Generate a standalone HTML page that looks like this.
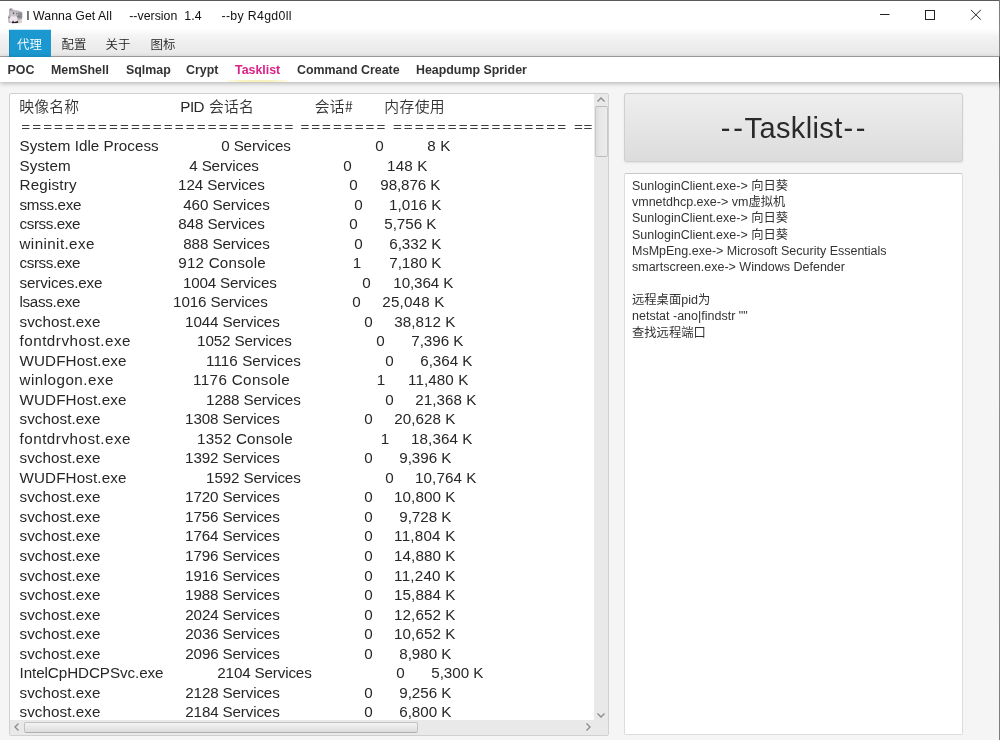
<!DOCTYPE html><html lang="zh"><head><meta charset="utf-8"><title>I Wanna Get All</title><style>

*{box-sizing:border-box;margin:0;padding:0}
html,body{width:1000px;height:740px;overflow:hidden;background:#f5f5f5}
body{position:relative;font-family:"Liberation Sans","Noto Sans CJK SC",sans-serif;color:#333}
.abs{position:absolute}
#top{left:0;top:0;width:1000px;height:29px;background:#fff;border-top:1px solid #5a5a5a}
#rb{left:999px;top:0;width:1px;height:740px;background:linear-gradient(#7a7a7a 0,#8c8c8c 56px,#3c3c3c 57px,#3c3c3c 78px,#9a9a9a 90px,#7d7d7d 100%)}
#menu{left:0;top:29px;width:1000px;height:28px;background:linear-gradient(#fff 0,#f4f4f4 25%,#ededed 60%,#e9e9e9 100%);border-bottom:1px solid #a6a6a6}
.mi{top:30px;height:27px;line-height:28px;font-size:12.4px;color:#222;text-align:center;font-family:"Noto Sans CJK SC",sans-serif;font-weight:350}
#m0{left:8.5px;width:42px;height:27px;background:#1b98d0;color:#fff;box-shadow:inset 1px 0 0 #178abd,0 -1px 0 #bfe8fa}
#tabs{left:0;top:57px;width:1000px;height:25px;background:#fff;box-shadow:0 1px 5px rgba(0,0,0,.30)}
.tb{top:61px;line-height:18px;font-size:12.4px;font-weight:bold;color:#333;white-space:pre}
#lp{left:9px;top:93px;width:600px;height:642.5px;background:#fff;border:1px solid #d0d0d0;border-radius:2px;overflow:hidden}
.t{position:absolute;white-space:pre;line-height:20px;height:20px;font-size:15.2px;color:#272727}
.ti{font-size:12.3px;color:#111}
.e{color:#3c3c3c;transform:translateY(0.35px) scaleY(0.7)}
.bt{font-size:29px;line-height:40px;height:40px;color:#2a2a2a}
.c{font-family:"Noto Sans CJK SC",sans-serif;font-size:14.8px;color:#333;font-weight:350}
#vs{left:594px;top:94px;width:14px;height:627px;background:#e9e9e9}
#vt{left:594.5px;top:106px;width:13px;height:50.5px;background:linear-gradient(90deg,#dcdcdc,#e6e6e6 30%,#ececec);border:1px solid #c9c9c9;border-top-color:#bcbcbc;border-bottom-color:#bcbcbc;border-radius:2px}
#hs{left:10px;top:720px;width:598px;height:14.5px;background:#e9e9e9}
#ht{left:23.5px;top:722px;width:394px;height:11px;background:linear-gradient(#f4f4f4,#dcdcdc);border:1px solid #c2c2c2;border-bottom-color:#b0b0b0;border-radius:2px}
#btn{left:624px;top:93px;width:339px;height:68.5px;background:linear-gradient(#eeeeee,#dcdcdc);border:1px solid #cfcfcf;border-radius:2px;text-align:center;font-size:31.4px;line-height:67px;color:#333;box-shadow:0 1px 2px rgba(0,0,0,.08)}
#rp{left:624px;top:173px;width:339px;height:562px;background:#fff;border:1px solid #dcdcdc;border-top-color:#c8c8c8;border-radius:2px}
.r{position:absolute;left:632px;white-space:pre;font-size:12.5px;line-height:16px;height:16px;color:#333}
.k{font-size:12.3px}
svg{position:absolute;overflow:visible}
#all{position:absolute;left:0;top:0;width:1000px;height:740px;will-change:transform}

</style></head><body>
<div id="all">
<div class="abs" id="top"></div>
<svg style="left:6px;top:6px" width="18" height="19" viewBox="0 0 18 19"><defs><filter id="b" x="-20%" y="-20%" width="140%" height="140%"><feGaussianBlur stdDeviation="0.55"/></filter></defs><g filter="url(#b)"><path d="M3 3L5.5 2L8 4L12 4.5L16 6L16 11L15 17L2.5 17L2 12L3 8Z" fill="#bdb5bc"/><ellipse cx="7.5" cy="13" rx="4" ry="3.2" fill="#eee6ea"/><ellipse cx="7.5" cy="8" rx="3.4" ry="2.4" fill="#cbc2ca"/><rect x="12" y="6.5" width="4.3" height="6" fill="#8f8f93"/><ellipse cx="7.6" cy="7.3" rx="0.7" ry="1" fill="#5a4f5c"/><path d="M3.6 4.5L4.6 1.9L6 4.2Z" fill="#8d888e"/><rect x="2.2" y="10.6" width="2" height="1.6" fill="#8e8a8d"/><rect x="11" y="9.6" width="3.6" height="1.8" fill="#7f8486"/><ellipse cx="10.8" cy="7.6" rx="0.6" ry="0.9" fill="#6a6070"/><path d="M6 16L7 14.5L8 16L12.5 15L12 17L6 17.3Z" fill="#2a2226"/><path d="M12.5 14L16 13.5L16 17L12 17.4Z" fill="#dcd5c8"/></g></svg>
<svg style="left:880px;top:9px" width="102" height="12" viewBox="0 0 102 12"><g stroke="#222" stroke-width="1" fill="none"><path d="M0 5.5h9.5"/><rect x="45.5" y="1.5" width="9" height="9"/><path d="M91 0.9l9.8 9.8M100.8 0.9l-9.8 9.8"/></g></svg>
<div class="abs" id="menu"></div>
<div class="abs mi" id="m0">代理</div>
<div class="abs mi" style="left:52px;width:44px">配置</div>
<div class="abs mi" style="left:96px;width:44px">关于</div>
<div class="abs mi" style="left:141px;width:44px">图标</div>
<div class="abs" id="tabs"></div>
<div class="abs tb" style="left:7.6px">POC</div>
<div class="abs tb" style="left:51px">MemShell</div>
<div class="abs tb" style="left:126px">Sqlmap</div>
<div class="abs tb" style="left:186px">Crypt</div>
<div class="abs tb" style="left:235px;color:#dc1f86">Tasklist</div>
<div class="abs tb" style="left:297px">Command Create</div>
<div class="abs tb" style="left:416px">Heapdump Sprider</div>
<div class="abs" style="left:227px;top:80px;width:61px;height:1.6px;background:linear-gradient(90deg,#fdfbe6,#f8f2bc 30%,#f8f2bc 70%,#fdfbe6)"></div>
<div class="abs" id="lp"></div>
<div class="abs" id="btn"></div>
<div class="abs" id="rp"></div>
<span class="t c" style="left:19.30px;top:96.0px;letter-spacing:0.17px">映像名称</span>
<span class="t" style="left:180.30px;top:97.0px;letter-spacing:-0.52px">PID</span>
<span class="t c" style="left:208.90px;top:96.0px;letter-spacing:0.25px">会话名</span>
<span class="t c" style="left:314.70px;top:96.0px;letter-spacing:0.25px">会话#</span>
<span class="t c" style="left:384.30px;top:96.0px;letter-spacing:0.37px">内存使用</span>
<span class="t bt" style="left:720.80px;top:108.0px;letter-spacing:2.74px">--</span>
<span class="t bt" style="left:744.60px;top:108.0px;letter-spacing:0.37px">Tasklist</span>
<span class="t bt" style="left:843.40px;top:108.0px;letter-spacing:2.74px">--</span>
<span class="t ti" style="left:26.20px;top:6.0px;letter-spacing:0.05px">I Wanna Get All</span>
<span class="t ti" style="left:129.20px;top:6.0px;letter-spacing:0.04px">--version  1.4</span>
<span class="t ti" style="left:221.50px;top:6.0px;letter-spacing:0.34px">--by R4gd0ll</span>
<span class="t e" style="left:21.20px;top:116.5px;letter-spacing:2.10px">=========================</span>
<span class="t e" style="left:300.40px;top:116.5px;letter-spacing:1.99px">========</span>
<span class="t e" style="left:392.90px;top:116.5px;letter-spacing:2.09px">================</span>
<span class="t e" style="left:573.90px;top:116.5px;letter-spacing:0.73px">==</span>
<span class="t nm" style="left:19.50px;top:136.0px;letter-spacing:0.04px">System Idle Process</span>
<span class="t" style="left:221.30px;top:136.0px;letter-spacing:-0.16px">0 Services</span>
<span class="t" style="left:375.25px;top:136.0px">0</span>
<span class="t" style="left:427.30px;top:136.0px;letter-spacing:0.12px">8 K</span>
<span class="t nm" style="left:19.50px;top:155.6px;letter-spacing:0.10px">System</span>
<span class="t" style="left:189.30px;top:155.6px;letter-spacing:-0.16px">4 Services</span>
<span class="t" style="left:343.25px;top:155.6px">0</span>
<span class="t" style="left:387.10px;top:155.6px;letter-spacing:0.14px">148 K</span>
<span class="t nm" style="left:19.50px;top:175.1px;letter-spacing:0.20px">Registry</span>
<span class="t" style="left:178.10px;top:175.1px;letter-spacing:-0.10px">124 Services</span>
<span class="t" style="left:349.25px;top:175.1px">0</span>
<span class="t" style="left:380.30px;top:175.1px;letter-spacing:-0.11px">98,876 K</span>
<span class="t nm" style="left:19.50px;top:194.6px;letter-spacing:-0.31px">smss.exe</span>
<span class="t" style="left:183.30px;top:194.6px;letter-spacing:-0.12px">460 Services</span>
<span class="t" style="left:354.25px;top:194.6px">0</span>
<span class="t" style="left:389.10px;top:194.6px;letter-spacing:-0.02px">1,016 K</span>
<span class="t nm" style="left:19.50px;top:214.1px;letter-spacing:-0.40px">csrss.exe</span>
<span class="t" style="left:178.30px;top:214.1px;letter-spacing:-0.12px">848 Services</span>
<span class="t" style="left:349.25px;top:214.1px">0</span>
<span class="t" style="left:384.30px;top:214.1px;letter-spacing:-0.05px">5,756 K</span>
<span class="t nm" style="left:19.50px;top:233.6px;letter-spacing:0.40px">wininit.exe</span>
<span class="t" style="left:183.30px;top:233.6px;letter-spacing:-0.12px">888 Services</span>
<span class="t" style="left:354.25px;top:233.6px">0</span>
<span class="t" style="left:389.30px;top:233.6px;letter-spacing:-0.05px">6,332 K</span>
<span class="t nm" style="left:19.50px;top:253.2px;letter-spacing:-0.40px">csrss.exe</span>
<span class="t" style="left:178.30px;top:253.2px;letter-spacing:0.21px">912 Console</span>
<span class="t" style="left:352.75px;top:253.2px">1</span>
<span class="t" style="left:389.30px;top:253.2px;letter-spacing:-0.05px">7,180 K</span>
<span class="t nm" style="left:19.50px;top:272.7px;letter-spacing:-0.13px">services.exe</span>
<span class="t" style="left:183.10px;top:272.7px;letter-spacing:-0.21px">1004 Services</span>
<span class="t" style="left:362.25px;top:272.7px">0</span>
<span class="t" style="left:393.30px;top:272.7px;letter-spacing:-0.11px">10,364 K</span>
<span class="t nm" style="left:19.50px;top:292.2px;letter-spacing:-0.30px">lsass.exe</span>
<span class="t" style="left:173.10px;top:292.2px;letter-spacing:-0.13px">1016 Services</span>
<span class="t" style="left:352.25px;top:292.2px">0</span>
<span class="t" style="left:382.30px;top:292.2px;letter-spacing:0.18px">25,048 K</span>
<span class="t nm" style="left:19.50px;top:311.7px;letter-spacing:0.08px">svchost.exe</span>
<span class="t" style="left:185.10px;top:311.7px;letter-spacing:-0.13px">1044 Services</span>
<span class="t" style="left:364.25px;top:311.7px">0</span>
<span class="t" style="left:394.30px;top:311.7px;letter-spacing:0.03px">38,812 K</span>
<span class="t nm" style="left:19.50px;top:331.2px;letter-spacing:0.51px">fontdrvhost.exe</span>
<span class="t" style="left:197.10px;top:331.2px;letter-spacing:-0.13px">1052 Services</span>
<span class="t" style="left:376.25px;top:331.2px">0</span>
<span class="t" style="left:411.30px;top:331.2px;letter-spacing:-0.05px">7,396 K</span>
<span class="t nm" style="left:19.50px;top:350.8px;letter-spacing:0.13px">WUDFHost.exe</span>
<span class="t" style="left:206.10px;top:350.8px;letter-spacing:0.06px">1116 Services</span>
<span class="t" style="left:385.25px;top:350.8px">0</span>
<span class="t" style="left:420.30px;top:350.8px;letter-spacing:-0.05px">6,364 K</span>
<span class="t nm" style="left:19.50px;top:370.3px;letter-spacing:0.48px">winlogon.exe</span>
<span class="t" style="left:193.10px;top:370.3px;letter-spacing:0.36px">1176 Console</span>
<span class="t" style="left:376.75px;top:370.3px">1</span>
<span class="t" style="left:408.10px;top:370.3px;letter-spacing:0.08px">11,480 K</span>
<span class="t nm" style="left:19.50px;top:389.8px;letter-spacing:0.13px">WUDFHost.exe</span>
<span class="t" style="left:206.10px;top:389.8px;letter-spacing:-0.13px">1288 Services</span>
<span class="t" style="left:385.25px;top:389.8px">0</span>
<span class="t" style="left:415.30px;top:389.8px;letter-spacing:0.03px">21,368 K</span>
<span class="t nm" style="left:19.50px;top:409.3px;letter-spacing:0.08px">svchost.exe</span>
<span class="t" style="left:185.10px;top:409.3px;letter-spacing:-0.13px">1308 Services</span>
<span class="t" style="left:364.25px;top:409.3px">0</span>
<span class="t" style="left:394.30px;top:409.3px;letter-spacing:0.03px">20,628 K</span>
<span class="t nm" style="left:19.50px;top:428.8px;letter-spacing:0.51px">fontdrvhost.exe</span>
<span class="t" style="left:197.10px;top:428.8px;letter-spacing:0.17px">1352 Console</span>
<span class="t" style="left:380.75px;top:428.8px">1</span>
<span class="t" style="left:411.10px;top:428.8px;letter-spacing:0.06px">18,364 K</span>
<span class="t nm" style="left:19.50px;top:448.4px;letter-spacing:0.08px">svchost.exe</span>
<span class="t" style="left:185.10px;top:448.4px;letter-spacing:-0.13px">1392 Services</span>
<span class="t" style="left:364.25px;top:448.4px">0</span>
<span class="t" style="left:399.30px;top:448.4px;letter-spacing:-0.05px">9,396 K</span>
<span class="t nm" style="left:19.50px;top:467.9px;letter-spacing:0.13px">WUDFHost.exe</span>
<span class="t" style="left:206.10px;top:467.9px;letter-spacing:-0.13px">1592 Services</span>
<span class="t" style="left:385.25px;top:467.9px">0</span>
<span class="t" style="left:415.10px;top:467.9px;letter-spacing:0.06px">10,764 K</span>
<span class="t nm" style="left:19.50px;top:487.4px;letter-spacing:0.08px">svchost.exe</span>
<span class="t" style="left:185.10px;top:487.4px;letter-spacing:-0.13px">1720 Services</span>
<span class="t" style="left:364.25px;top:487.4px">0</span>
<span class="t" style="left:394.10px;top:487.4px;letter-spacing:0.06px">10,800 K</span>
<span class="t nm" style="left:19.50px;top:506.9px;letter-spacing:0.08px">svchost.exe</span>
<span class="t" style="left:185.10px;top:506.9px;letter-spacing:-0.13px">1756 Services</span>
<span class="t" style="left:364.25px;top:506.9px">0</span>
<span class="t" style="left:399.30px;top:506.9px;letter-spacing:-0.05px">9,728 K</span>
<span class="t nm" style="left:19.50px;top:526.4px;letter-spacing:0.08px">svchost.exe</span>
<span class="t" style="left:185.10px;top:526.4px;letter-spacing:-0.13px">1764 Services</span>
<span class="t" style="left:364.25px;top:526.4px">0</span>
<span class="t" style="left:394.10px;top:526.4px;letter-spacing:0.22px">11,804 K</span>
<span class="t nm" style="left:19.50px;top:546.0px;letter-spacing:0.08px">svchost.exe</span>
<span class="t" style="left:185.10px;top:546.0px;letter-spacing:-0.13px">1796 Services</span>
<span class="t" style="left:364.25px;top:546.0px">0</span>
<span class="t" style="left:394.10px;top:546.0px;letter-spacing:0.06px">14,880 K</span>
<span class="t nm" style="left:19.50px;top:565.5px;letter-spacing:0.08px">svchost.exe</span>
<span class="t" style="left:185.10px;top:565.5px;letter-spacing:-0.13px">1916 Services</span>
<span class="t" style="left:364.25px;top:565.5px">0</span>
<span class="t" style="left:394.10px;top:565.5px;letter-spacing:0.22px">11,240 K</span>
<span class="t nm" style="left:19.50px;top:585.0px;letter-spacing:0.08px">svchost.exe</span>
<span class="t" style="left:185.10px;top:585.0px;letter-spacing:-0.13px">1988 Services</span>
<span class="t" style="left:364.25px;top:585.0px">0</span>
<span class="t" style="left:394.10px;top:585.0px;letter-spacing:0.06px">15,884 K</span>
<span class="t nm" style="left:19.50px;top:604.5px;letter-spacing:0.08px">svchost.exe</span>
<span class="t" style="left:185.30px;top:604.5px;letter-spacing:-0.15px">2024 Services</span>
<span class="t" style="left:364.25px;top:604.5px">0</span>
<span class="t" style="left:394.10px;top:604.5px;letter-spacing:0.06px">12,652 K</span>
<span class="t nm" style="left:19.50px;top:624.0px;letter-spacing:0.08px">svchost.exe</span>
<span class="t" style="left:185.30px;top:624.0px;letter-spacing:-0.15px">2036 Services</span>
<span class="t" style="left:364.25px;top:624.0px">0</span>
<span class="t" style="left:394.10px;top:624.0px;letter-spacing:0.06px">10,652 K</span>
<span class="t nm" style="left:19.50px;top:643.6px;letter-spacing:0.08px">svchost.exe</span>
<span class="t" style="left:185.30px;top:643.6px;letter-spacing:-0.15px">2096 Services</span>
<span class="t" style="left:364.25px;top:643.6px">0</span>
<span class="t" style="left:399.30px;top:643.6px;letter-spacing:-0.05px">8,980 K</span>
<span class="t nm" style="left:19.50px;top:663.1px;letter-spacing:-0.07px">IntelCpHDCPSvc.exe</span>
<span class="t" style="left:217.30px;top:663.1px;letter-spacing:-0.15px">2104 Services</span>
<span class="t" style="left:396.25px;top:663.1px">0</span>
<span class="t" style="left:431.30px;top:663.1px;letter-spacing:-0.05px">5,300 K</span>
<span class="t nm" style="left:19.50px;top:682.6px;letter-spacing:0.08px">svchost.exe</span>
<span class="t" style="left:185.30px;top:682.6px;letter-spacing:-0.15px">2128 Services</span>
<span class="t" style="left:364.25px;top:682.6px">0</span>
<span class="t" style="left:399.30px;top:682.6px;letter-spacing:-0.05px">9,256 K</span>
<span class="t nm" style="left:19.50px;top:702.1px;letter-spacing:0.08px">svchost.exe</span>
<span class="t" style="left:185.30px;top:702.1px;letter-spacing:-0.15px">2184 Services</span>
<span class="t" style="left:364.25px;top:702.1px">0</span>
<span class="t" style="left:399.30px;top:702.1px;letter-spacing:-0.05px">6,800 K</span>
<div class="abs" id="vs"></div><div class="abs" id="vt"></div><div class="abs" id="hs"></div><div class="abs" id="ht"></div>
<div class="abs" style="left:594px;top:720px;width:14px;height:14px;background:#e9e9e9"></div>
<svg style="left:594px;top:93px" width="14" height="14" viewBox="0 0 14 14"><path d="M3.5 8.5L7 5l3.5 3.5" stroke="#8a8a8a" stroke-width="1.3" fill="none"/></svg>
<svg style="left:594px;top:707.5px" width="14" height="14" viewBox="0 0 14 14"><path d="M3.5 5.5L7 9l3.5-3.5" stroke="#8a8a8a" stroke-width="1.3" fill="none"/></svg>
<svg style="left:10px;top:720px" width="14" height="14" viewBox="0 0 14 14"><path d="M8.5 3.5L5 7l3.5 3.5" stroke="#8a8a8a" stroke-width="1.3" fill="none"/></svg>
<svg style="left:581px;top:720px" width="14" height="14" viewBox="0 0 14 14"><path d="M5.5 3.5L9 7l-3.5 3.5" stroke="#8a8a8a" stroke-width="1.3" fill="none"/></svg>
<div class="r" style="top:178px">SunloginClient.exe-&gt; <span class="k">向日葵</span></div>
<div class="r" style="top:194px">vmnetdhcp.exe-&gt; vm<span class="k">虚拟机</span></div>
<div class="r" style="top:210px">SunloginClient.exe-&gt; <span class="k">向日葵</span></div>
<div class="r" style="top:227px">SunloginClient.exe-&gt; <span class="k">向日葵</span></div>
<div class="r" style="top:243px">MsMpEng.exe-&gt; Microsoft Security Essentials</div>
<div class="r" style="top:259px">smartscreen.exe-&gt; Windows Defender</div>
<div class="r" style="top:292px"><span class="k">远程桌面</span>pid<span class="k">为</span></div>
<div class="r" style="top:308px">netstat -ano|findstr ""</div>
<div class="r" style="top:325px"><span class="k">查找远程端口</span></div>
<div class="abs" id="rb"></div>
</div></body></html>
